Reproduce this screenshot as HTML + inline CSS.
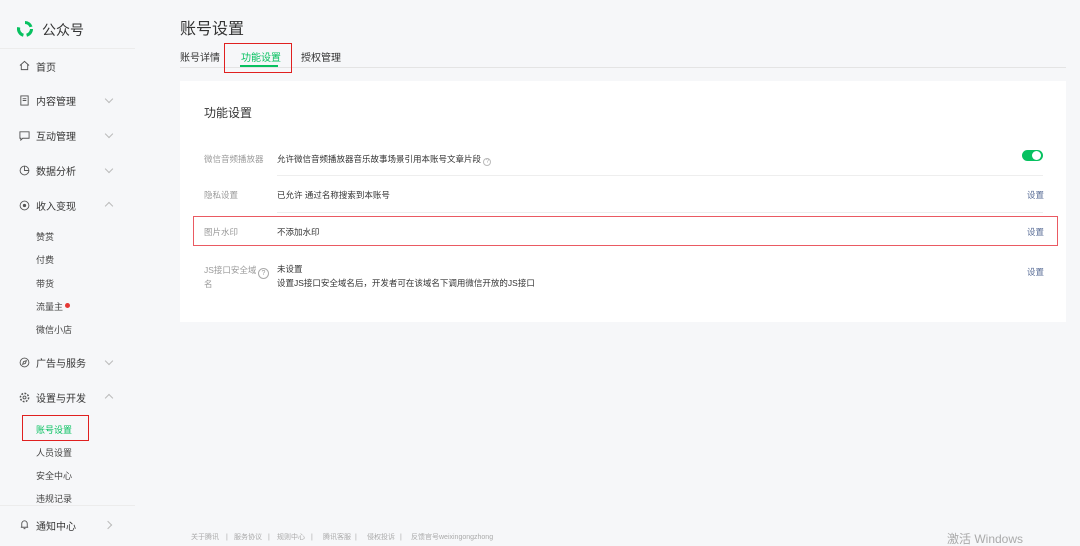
<!DOCTYPE html>
<html><head><meta charset="utf-8"><style>
*{margin:0;padding:0;box-sizing:border-box}
body{width:1080px;height:544px;background:#f6f7f9;font-family:"Liberation Sans","Noto Sans CJK SC",sans-serif;position:relative;overflow:hidden;color:#333;line-height:1}
.a{position:absolute;white-space:nowrap;line-height:1}
.t{margin-top:3px}
.nav{font-size:10px;color:#353535;margin-top:3px}
.sub{font-size:9px;color:#444;margin-top:2px}
.ic{position:absolute;left:19px;width:11px;height:11px}
.chev{position:absolute;left:106px;width:6px;height:6px;border-right:1px solid #bbb;border-bottom:1px solid #bbb}
.lbl{font-size:8.5px;color:#9a9a9a;margin-top:2px}
.val{font-size:8.5px;color:#333;margin-top:2px}
.set{font-size:8.5px;color:#576b95;left:1027px;margin-top:2px}
.ft{position:absolute;top:534px;font-size:7px;color:#aaa;white-space:nowrap;line-height:1}
</style></head><body>
<svg class="a" style="left:15px;top:19px" width="20" height="20" viewBox="0 0 20 20"><path d="M10 2a8 8 0 0 1 7.5 5.5l-3 .8A5 5 0 0 0 10 5z" fill="#07c160"/><path d="M18 10a8 8 0 0 1-6 7.7l-.8-3A5 5 0 0 0 15 10z" fill="#07c160"/><path d="M8 17.7A8 8 0 0 1 2.2 8l3 .6A5 5 0 0 0 8.8 14.7z" fill="#07c160"/></svg>
<div class="a" style="left:42px;top:23px;font-size:14px;color:#333">公众号</div>
<div class="a" style="left:0;top:48px;width:135px;height:1px;background:#ececec"></div>

<svg class="ic" style="top:60px" viewBox="0 0 12 12"><path d="M1 6L6 1.5 11 6M2.5 5v5.5h7V5" fill="none" stroke="#555"/></svg>
<div class="a nav" style="left:36px;top:61px">首页</div>
<svg class="ic" style="top:95px" viewBox="0 0 12 12"><rect x="2" y="1" width="8" height="10" fill="none" stroke="#555"/><path d="M4 4h4M4 6h4" stroke="#555"/></svg>
<div class="a nav" style="left:36px;top:95px">内容管理</div><div class="a chev" style="top:96px;transform:rotate(45deg)"></div>
<svg class="ic" style="top:130px" viewBox="0 0 12 12"><path d="M1 2h10v7H4l-2 2V9H1z" fill="none" stroke="#555"/></svg>
<div class="a nav" style="left:36px;top:130px">互动管理</div><div class="a chev" style="top:131px;transform:rotate(45deg)"></div>
<svg class="ic" style="top:165px" viewBox="0 0 12 12"><circle cx="6" cy="6" r="4.8" fill="none" stroke="#555"/><path d="M6 1.2V6h4.8" fill="none" stroke="#555"/></svg>
<div class="a nav" style="left:36px;top:165px">数据分析</div><div class="a chev" style="top:166px;transform:rotate(45deg)"></div>
<svg class="ic" style="top:200px" viewBox="0 0 12 12"><circle cx="6" cy="6" r="4.8" fill="none" stroke="#555"/><circle cx="6" cy="6" r="1.8" fill="#555"/></svg>
<div class="a nav" style="left:36px;top:200px">收入变现</div><div class="a chev" style="top:203px;transform:rotate(225deg)"></div>
<div class="a sub" style="left:36px;top:231px">赞赏</div>
<div class="a sub" style="left:36px;top:254px">付费</div>
<div class="a sub" style="left:36px;top:278px">带货</div>
<div class="a sub" style="left:36px;top:301px">流量主</div><div class="a" style="left:65px;top:303px;width:5px;height:5px;border-radius:50%;background:#e53935"></div>
<div class="a sub" style="left:36px;top:324px">微信小店</div>
<svg class="ic" style="top:357px" viewBox="0 0 12 12"><circle cx="6" cy="6" r="4.8" fill="none" stroke="#555"/><path d="M8 4L5 5 4 8 7 7z" fill="none" stroke="#555"/></svg>
<div class="a nav" style="left:36px;top:357px">广告与服务</div><div class="a chev" style="top:358px;transform:rotate(45deg)"></div>
<svg class="ic" style="top:392px" viewBox="0 0 12 12"><circle cx="6" cy="6" r="4.5" fill="none" stroke="#555" stroke-width="1.6" stroke-dasharray="2 1.5"/><circle cx="6" cy="6" r="1.6" fill="none" stroke="#555"/></svg>
<div class="a nav" style="left:36px;top:392px">设置与开发</div><div class="a chev" style="top:395px;transform:rotate(225deg)"></div>
<div class="a" style="left:22px;top:415px;width:67px;height:26px;border:1.5px solid #e02020"></div>
<div class="a sub" style="left:36px;top:424px;color:#07c160">账号设置</div>
<div class="a sub" style="left:36px;top:447px">人员设置</div>
<div class="a sub" style="left:36px;top:470px">安全中心</div>
<div class="a sub" style="left:36px;top:493px">违规记录</div>
<div class="a" style="left:0;top:505px;width:135px;height:1px;background:#ececec"></div>
<svg class="ic" style="top:519px" viewBox="0 0 12 12"><path d="M3 9V5a3 3 0 0 1 6 0v4h1H2M5 10.5h2" fill="none" stroke="#555"/></svg>
<div class="a nav" style="left:36px;top:520px">通知中心</div><div class="a chev" style="left:105px;top:522px;transform:rotate(-45deg)"></div>

<div class="a t" style="left:180px;top:19px;font-size:16px;color:#333">账号设置</div>
<div class="a t" style="left:180px;top:51px;font-size:10px;color:#333">账号详情</div>
<div class="a t" style="left:241px;top:51px;font-size:10px;color:#07c160">功能设置</div>
<div class="a" style="left:240px;top:65px;width:38px;height:2px;background:#07c160"></div>
<div class="a t" style="left:301px;top:51px;font-size:10px;color:#333">授权管理</div>
<div class="a" style="left:180px;top:67px;width:886px;height:1px;background:#e4e4e4"></div>
<div class="a" style="left:224px;top:43px;width:68px;height:30px;border:1.5px solid #e02020"></div>
<svg class="a" style="left:320px;top:80px" width="40" height="55"><path d="M7 3L31 50" stroke="#e02020" stroke-width="1"/><path d="M28 45l4 7 0-8z" fill="#e02020"/></svg>

<div class="a" style="left:180px;top:81px;width:886px;height:241px;background:#fff"></div>
<div class="a t" style="left:204px;top:104px;font-size:12px;color:#333">功能设置</div>
<div class="a lbl" style="left:204px;top:153px">微信音频播放器</div>
<div class="a val" style="left:277px;top:153px">允许微信音频播放器音乐故事场景引用本账号文章片段 <span style="display:inline-block;width:8px;height:8px;border:1px solid #bbb;border-radius:50%;font-size:6px;line-height:6px;text-align:center;color:#aaa;vertical-align:-1px">?</span></div>
<div class="a" style="left:1022px;top:150px;width:21px;height:11px;border-radius:6px;background:#07c160"></div>
<div class="a" style="left:1032px;top:151px;width:9px;height:9px;border-radius:50%;background:#fff"></div>
<div class="a" style="left:277px;top:175px;width:766px;height:1px;background:#eee"></div>
<div class="a lbl" style="left:204px;top:189px">隐私设置</div>
<div class="a val" style="left:277px;top:189px">已允许 通过名称搜索到本账号</div>
<div class="a set" style="top:189px">设置</div>
<div class="a" style="left:277px;top:212px;width:766px;height:1px;background:#eee"></div>
<div class="a" style="left:193px;top:216px;width:865px;height:30px;border:1.5px solid #ea5a62"></div>
<div class="a lbl" style="left:204px;top:226px">图片水印</div>
<div class="a val" style="left:277px;top:226px">不添加水印</div>
<div class="a set" style="top:226px">设置</div>
<div class="a lbl" style="left:204px;top:261px;line-height:14px">JS接口安全域<br>名</div>
<div class="a" style="left:258px;top:268px;width:11px;height:11px;border:1px solid #aaa;border-radius:50%;font-size:7px;line-height:9px;text-align:center;color:#999">?</div>
<div class="a val" style="left:277px;top:260px;line-height:14px">未设置<br>设置JS接口安全域名后，开发者可在该域名下调用微信开放的JS接口</div>
<div class="a set" style="top:266px">设置</div>

<div class="ft" style="left:191px">关于腾讯</div><div class="ft" style="left:226px">|</div>
<div class="ft" style="left:234px">服务协议</div><div class="ft" style="left:268px">|</div>
<div class="ft" style="left:277px">规则中心</div><div class="ft" style="left:311px">|</div>
<div class="ft" style="left:323px">腾讯客服</div><div class="ft" style="left:355px">|</div>
<div class="ft" style="left:367px">侵权投诉</div><div class="ft" style="left:400px">|</div>
<div class="ft" style="left:411px">反馈官号weixingongzhong</div>
<div class="a" style="left:947px;top:533px;font-size:12px;color:#aaa">激活 Windows</div>
</body></html>
